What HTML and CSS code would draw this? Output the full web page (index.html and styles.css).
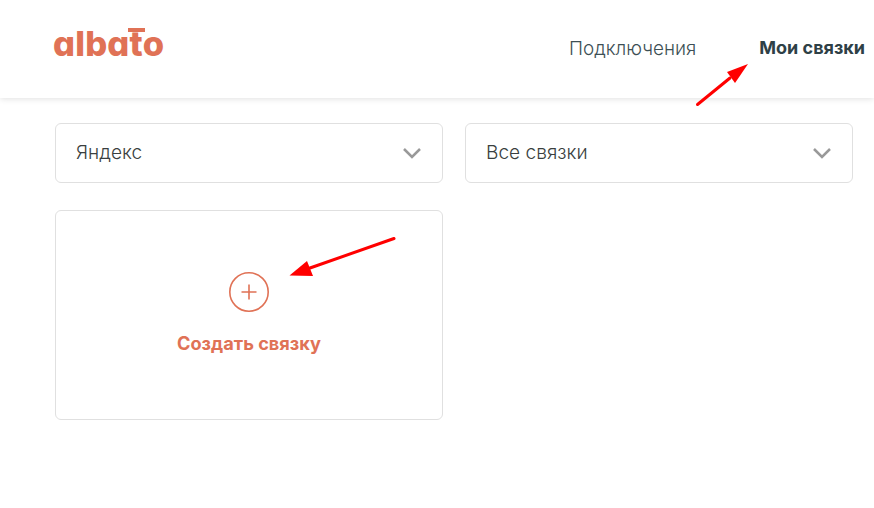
FILE: index.html
```html
<!DOCTYPE html>
<html lang="ru">
<head>
  <meta charset="UTF-8">
  <title>Albato</title>
  <link rel="stylesheet" href="styles.css">
</head>
<body>
  <header class="header">
    <div class="logo">alba<span class="logo-t">t</span>o</div>
    <nav class="nav">
      <a class="nav-link">Подключения</a>
      <a class="nav-link active">Мои связки</a>
    </nav>
  </header>

  <main class="content">
    <div class="select">
      <span>Яндекс</span>
      <svg class="chevron" width="20" height="12" viewBox="0 0 20 12"><path d="M2 2l8 8 8-8"/></svg>
    </div>
    <div class="select">
      <span>Все связки</span>
      <svg class="chevron" width="20" height="12" viewBox="0 0 20 12"><path d="M2 2l8 8 8-8"/></svg>
    </div>
    <div class="card">
      <svg class="plus" width="40" height="40" viewBox="0 0 40 40">
        <circle cx="20" cy="20" r="19.2"/>
        <path d="M20 12.5v15M12.5 20h15"/>
      </svg>
      <div class="card-title">Создать связку</div>
    </div>
  </main>

  <svg class="arrows" width="874" height="508" viewBox="0 0 874 508">
    <path class="shaft" d="M697.500 104.500L730 78"/>
    <polygon points="748,64 727,72 735,83"/>
    <path class="shaft" d="M394 238.500L310 268"/>
    <polygon points="289.500,275.500 307,261 313,276"/>
  </svg>
</body>
</html>
```

FILE: styles.css
```css
body {
  margin: 0;
  height: 508px;
  overflow: hidden;
  background: #fff;
  font-family: "Inter", "Noto Sans", sans-serif;
  color: #3f4a4d;
}

.header {
  height: 98px;
  display: flex;
  justify-content: space-between;
  align-items: center;
  padding: 0 9px 0 53px;
  box-shadow: 0 1px 6px rgba(0, 0, 0, 0.12);
}

.logo {
  margin-top: -10px;
  font-size: 34.5px;
  line-height: 40px;
  font-weight: 800;
  letter-spacing: 0.2px;
  color: #e07256;
  font-feature-settings: "cv11";
}

.logo-t {
  position: relative;
}

.logo-t::before {
  content: "";
  position: absolute;
  left: -2px;
  right: -2px;
  top: 5px;
  height: 4px;
  background: #e07256;
}

.nav {
  display: flex;
  gap: 63px;
  margin-top: -2px;
}

.nav-link {
  font-size: 18.9px;
  font-weight: 300;
  color: #3d4f55;
}

.nav-link.active {
  font-size: 18px;
  font-weight: 700;
  color: #2e4046;
}

.content {
  display: grid;
  grid-template-columns: 388px 388px;
  column-gap: 22px;
  row-gap: 27px;
  padding: 25px 0 0 55px;
}

.select {
  height: 58px;
  display: flex;
  justify-content: space-between;
  align-items: center;
  padding: 0 20px;
  border: 1px solid #e0e0e0;
  border-radius: 6px;
  font-size: 19.1px;
  font-weight: 300;
  color: #3a3f40;
}

.select span {
  margin-top: -2px;
}

.chevron path {
  fill: none;
  stroke: #999;
  stroke-width: 2.5;
}

.card {
  height: 208px;
  display: flex;
  flex-direction: column;
  align-items: center;
  border: 1px solid #e0e0e0;
  border-radius: 6px;
}

.plus {
  margin-top: 61px;
}

.plus circle,
.plus path {
  fill: none;
  stroke: #e07256;
  stroke-width: 1.6;
}

.card-title {
  margin-top: 20px;
  font-size: 18.2px;
  font-weight: 700;
  color: #e07256;
}

.arrows {
  position: absolute;
  top: 0;
  left: 0;
  pointer-events: none;
}

.arrows polygon {
  fill: #ff0000;
}

.arrows .shaft {
  fill: none;
  stroke: #ff0000;
  stroke-width: 3;
  stroke-linecap: round;
}
```
